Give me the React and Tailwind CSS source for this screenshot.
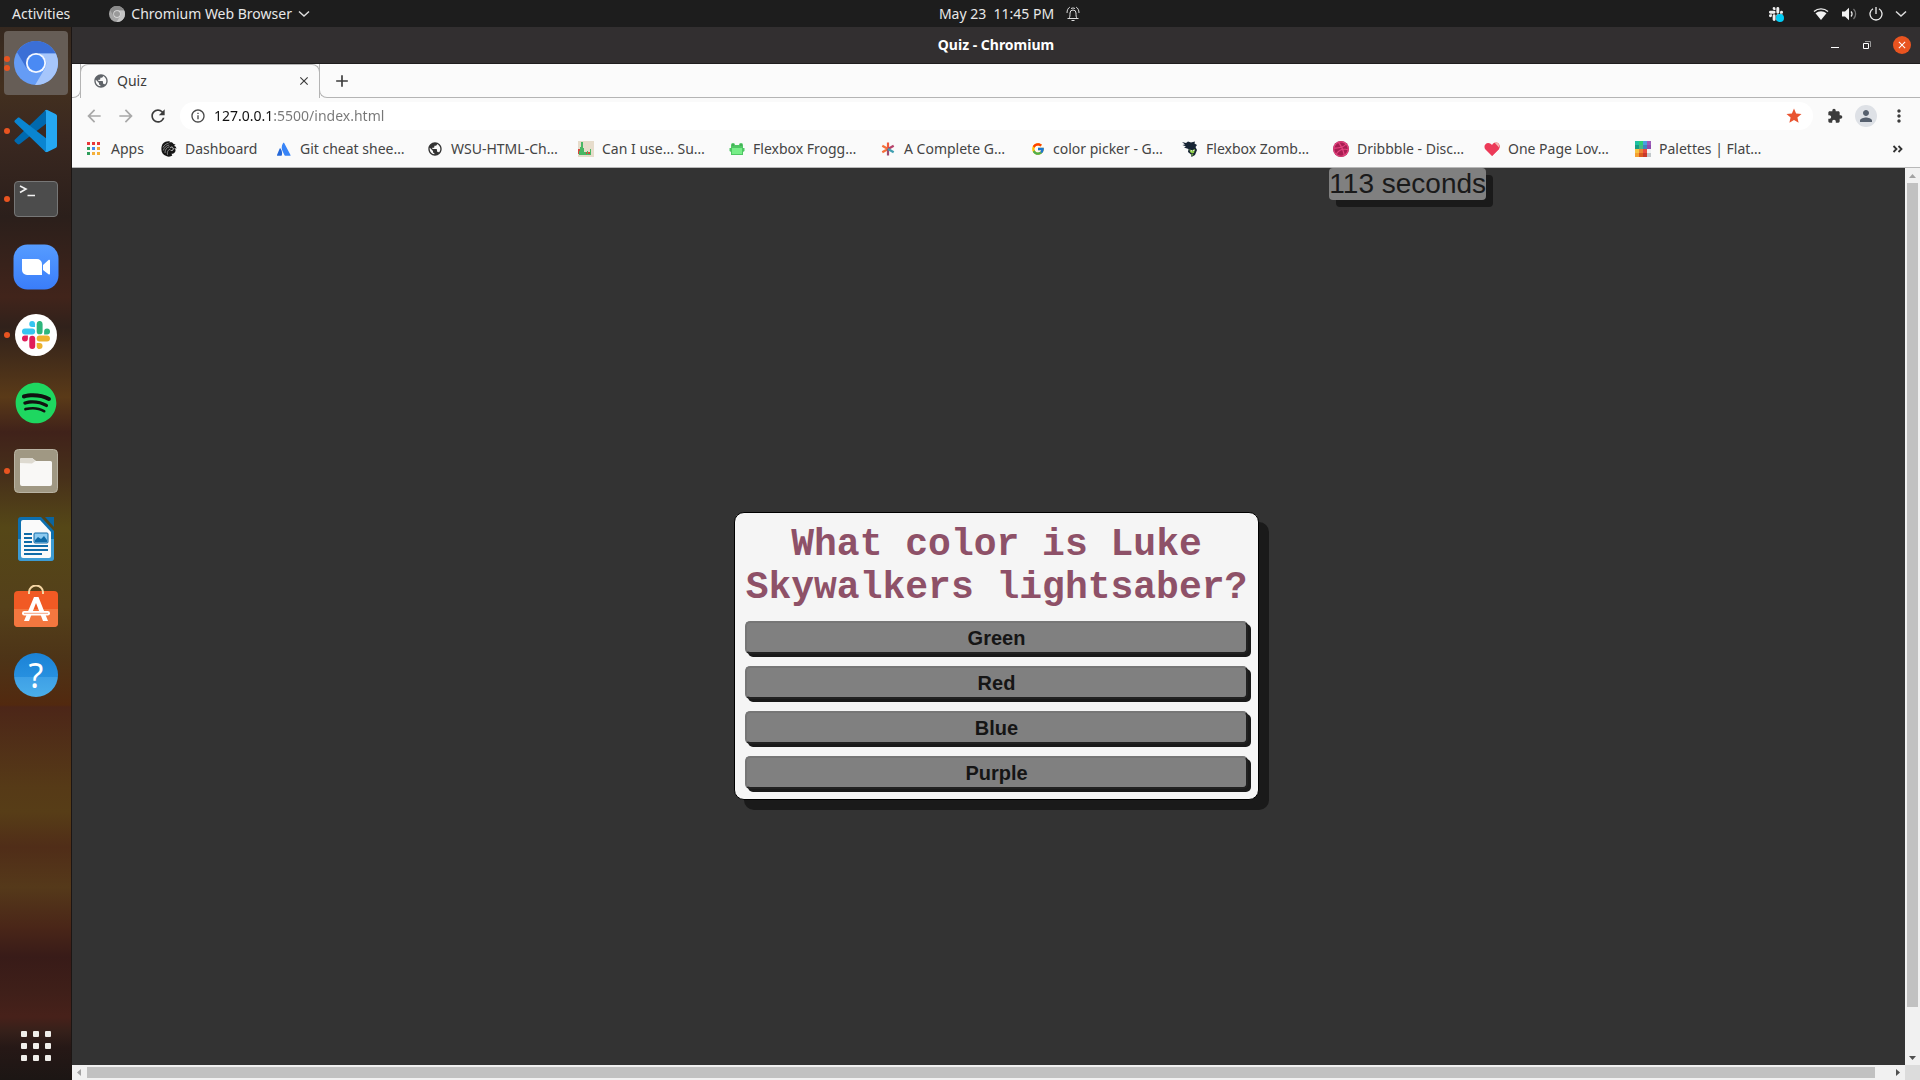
import React from "react";
import {
  MdArrowBack,
  MdArrowForward,
  MdRefresh,
  MdInfoOutline,
  MdExtension,
  MdPerson,
  MdPublic,
  MdStar,
  MdMoreVert,
  MdClose,
  MdAdd,
} from "react-icons/md";
import { FaSpotify, FaDribbble } from "react-icons/fa";
import { FcGoogle } from "react-icons/fc";

function ChromiumIcon({ className, mono = false }) {
  const c = mono
    ? ["#8a8a8a", "#a5a5a5", "#c4c4c4", "#9a9a9a", "#e4e4e4"]
    : ["#3b6fd6", "#659cf5", "#a6c6fb", "#4a8af4", "#f4f8ff"];
  return (
    <svg viewBox="0 0 48 48" className={className} aria-hidden="true">
      <circle cx="24" cy="24" r="24" fill={c[1]} />
      <path d="M3.2 12A24 24 0 0 1 45.6 13.5H24L13.5 29.5Z" fill={c[0]} />
      <path d="M45.6 13.5A24 24 0 0 1 23 48L34 29.5A11 11 0 0 0 24 13.5Z" fill={c[2]} />
      <circle cx="24" cy="24" r="11" fill={c[4]} />
      <circle cx="24" cy="24" r="9" fill={c[3]} />
    </svg>
  );
}

function CodeIcon() {
  return (
    <svg viewBox="0 0 44 44" className="size-11" aria-hidden="true">
      <path d="M1 30.5a1.500 1.500 0 0 0 0 2.200l2.500 2.300c.6.600 1.600.600 2.300.1L33 14V.8c-1 0-1.600.5-2.400 1.200Z" fill="#0069ae" />
      <path d="M1 13.500a1.500 1.500 0 0 1 0-2.200l2.500-2.300c.6-.6 1.600-.6 2.300-.1L33 30v13.200c-1 0-1.600-.5-2.400-1.200Z" fill="#0a85d1" />
      <path d="M30.600 42c1.200 1.100 2.200 1.200 3.300.7l7.600-3.700c1-.5 1.500-1.200 1.500-2.300V7.300c0-1.100-.5-1.800-1.500-2.300L33.900 1.300c-1.100-.5-2.100-.4-3.300.7.800-.3 1.400.2 1.400 1.200v37.600c0 1-.6 1.500-1.400 1.200Z" fill="#25a8f2" />
    </svg>
  );
}

function TerminalIcon() {
  return (
    <svg viewBox="0 0 44 36" className="h-9 w-11" aria-hidden="true">
      <rect x="0.500" y="0.500" width="43" height="35" rx="3.500" fill="#4c4c4c" stroke="#777" />
      <path d="M6 5l6 3-6 3.500M13.500 14.500h7.500" fill="none" stroke="#f2f2f2" strokeWidth="1.600" />
    </svg>
  );
}

function ZoomIcon() {
  return (
    <svg viewBox="0 0 46 46" className="size-[46px]" aria-hidden="true">
      <defs>
        <linearGradient id="zoom-blue" x1="0" y1="0" x2="0" y2="1">
          <stop offset="0" stopColor="#569cff" />
          <stop offset="1" stopColor="#3a7dfa" />
        </linearGradient>
      </defs>
      <rect x="0.500" y="0.500" width="45" height="45" rx="14" fill="url(#zoom-blue)" />
      <path d="M9 15h15a5 5 0 0 1 5 5v11H14a5 5 0 0 1-5-5ZM30 21l5.500-5c.8-.6 1.500-.3 1.500.6v13c0 .9-.7 1.200-1.500.6L30 26Z" fill="#fff" />
    </svg>
  );
}

function SlackMark({ className, colors }) {
  const [blue, green, yellow, red] = colors;
  return (
    <svg viewBox="0 0 28 28" className={className} aria-hidden="true">
      <path d="M10.200 0a2.900 2.900 0 1 0 0 5.900H13V2.900A2.900 2.900 0 0 0 10.200 0ZM10.200 7.500H2.900a2.900 2.900 0 0 0 0 5.900h7.300a2.900 2.900 0 0 0 0-5.900Z" fill={blue} />
      <path d="M28 10.400a2.900 2.900 0 0 0-5.900 0v3H25a2.900 2.900 0 0 0 3-3ZM20.600 10.400V2.900a2.900 2.900 0 0 0-5.900 0v7.500a2.900 2.900 0 0 0 5.900 0Z" fill={green} />
      <path d="M17.600 28a2.900 2.900 0 0 0 0-5.900h-2.900V25a2.900 2.900 0 0 0 2.900 3ZM17.600 20.500H25a2.900 2.900 0 0 0 0-5.900h-7.400a2.900 2.900 0 0 0 0 5.900Z" fill={yellow} />
      <path d="M0 17.600a2.900 2.900 0 0 0 5.900 0v-3H2.900a2.900 2.900 0 0 0-2.900 3ZM7.300 17.600V25a2.900 2.900 0 0 0 5.900 0v-7.400a2.900 2.900 0 0 0-5.900 0Z" fill={red} />
    </svg>
  );
}

function FilesIcon() {
  return (
    <svg viewBox="0 0 44 44" className="size-11" aria-hidden="true">
      <rect x="0.500" y="0.500" width="43" height="43" rx="4" fill="#a09883" stroke="#b9b3a3" />
      <path d="M6 35V10.500A1.500 1.500 0 0 1 7.500 9H18l4 3h14.500A1.500 1.500 0 0 1 38 13.500V35a2 2 0 0 1-2 2H8a2 2 0 0 1-2-2Z" fill="#f9f8f6" />
      <path d="M6 14V10.500A1.500 1.500 0 0 1 7.500 9H18l3.500 3L18 14.500Z" fill="#dedad0" />
    </svg>
  );
}

function WriterIcon() {
  return (
    <svg viewBox="0 0 38 46" className="h-[46px] w-[38px]" aria-hidden="true">
      <path d="M4 1h20l13 14v27a3 3 0 0 1-3 3H4a3 3 0 0 1-3-3V4a3 3 0 0 1 3-3Z" fill="#0d6fae" />
      <path d="M1 23h36v19a3 3 0 0 1-3 3H4a3 3 0 0 1-3-3Z" fill="#3c9bd3" />
      <path d="M6 4h17l11 12v24a2 2 0 0 1-2 2H6a2 2 0 0 1-2-2V6a2 2 0 0 1 2-2Z" fill="#fafafa" />
      <path d="M28 1h9v10Z" fill="#0b659f" />
      <path d="M7 18h8M7 22h8M7 26h8M7 30h24M7 34h24M7 38h18" stroke="#0f6ba8" strokeWidth="2" />
      <rect x="17" y="17" width="14" height="10" rx="1" fill="#8ccaf0" stroke="#0f6ba8" />
      <path d="M18 26v-2l3-3 3 2 3-3 3 4v2Z" fill="#0f6ba8" />
    </svg>
  );
}

function SoftwareIcon() {
  return (
    <svg viewBox="0 0 44 44" className="size-11" aria-hidden="true">
      <rect y="6" width="44" height="36" rx="4" fill="#f15a24" />
      <path d="M0 24h44v14a4 4 0 0 1-4 4H4a4 4 0 0 1-4-4Z" fill="#f3773f" />
      <path d="M15 9V7a7 6.500 0 0 1 14 0v2" fill="none" stroke="#f5d6a4" strokeWidth="2" />
      <path d="M20 12h4.500L34 36h-5l-7-18-7 18h-5Z" fill="#fff" />
      <rect x="8" y="26" width="28" height="4.500" rx="2.200" fill="#fff" />
      <path d="M10 28.300h24" stroke="#f7a27e" />
    </svg>
  );
}

function HelpIcon() {
  return (
    <span className="flex size-11 items-center justify-center rounded-full bg-[linear-gradient(#1b82d6_0%,#2790df_54%,#3ea0e6_55%,#4aaeea_100%)] font-['Noto_Sans',sans-serif] text-[34px] leading-none text-white">
      ?
    </span>
  );
}

const dock = [
  { name: "Chromium", dots: 2, active: true, icon: <ChromiumIcon className="size-11" /> },
  { name: "Visual Studio Code", dots: 1, icon: <CodeIcon /> },
  { name: "Terminal", dots: 1, icon: <TerminalIcon /> },
  { name: "Zoom", dots: 0, icon: <ZoomIcon /> },
  {
    name: "Slack",
    dots: 1,
    icon: (
      <span className="flex size-[42px] items-center justify-center rounded-full bg-white">
        <SlackMark className="size-7" colors={["#36c5f0", "#2eb67d", "#ecb22e", "#e01e5a"]} />
      </span>
    ),
  },
  {
    name: "Spotify",
    dots: 0,
    icon: (
      <span className="rounded-full bg-[radial-gradient(#111_62%,transparent_63%)]">
        <FaSpotify className="size-[42px] text-[#1ed760]" />
      </span>
    ),
  },
  { name: "Files", dots: 1, icon: <FilesIcon /> },
  { name: "LibreOffice Writer", dots: 0, icon: <WriterIcon /> },
  { name: "Ubuntu Software", dots: 0, icon: <SoftwareIcon /> },
  { name: "Help", dots: 0, icon: <HelpIcon /> },
];

function Dock() {
  return (
    <nav
      aria-label="Dock"
      className="flex w-[72px] shrink-0 flex-col gap-1 border-r border-[#1c1614] bg-[linear-gradient(#35281f_0px,#43301f_60px,#3a2820_110px,#2b1f1b_190px,#41241b_270px,#30211b_300px,#5a3a18_370px,#40221a_405px,#47301a_450px,#554717_500px,#54401a_580px,#4d3417_630px,#52290f_678px,#4c2618_680px,#563a17_760px,#573d17_785px,#502d18_820px,#55391a_860px,#4a2618_900px,#381b18_930px,#3f1f19_965px,#47211a_990px,#35201a_1005px,#261816_1020px,#1c1614_1053px)] pt-1"
    >
      {dock.map((d) => (
        <button
          key={d.name}
          type="button"
          aria-label={d.name}
          className={
            d.active
              ? "relative ml-1 flex size-16 items-center justify-center rounded bg-[#665d56]"
              : "relative ml-1 flex size-16 items-center justify-center rounded"
          }
        >
          {d.icon}
          <span className="absolute top-0 left-0 flex h-full flex-col justify-center gap-[3px]">
            {Array.from({ length: d.dots }, (_, i) => (
              <span key={i} className="size-[6px] rounded-full bg-[#e95420]" />
            ))}
          </span>
        </button>
      ))}
      <button
        type="button"
        aria-label="Show applications"
        className="mt-auto mb-[19px] ml-[21px] grid size-[30px] grid-cols-3 gap-[6px]"
      >
        {Array.from({ length: 9 }, (_, i) => (
          <span key={i} className="size-[6px] rounded-[1px] bg-[#f0eeea]" />
        ))}
      </button>
    </nav>
  );
}

function Chevron() {
  return (
    <svg viewBox="0 0 12 8" className="h-2 w-3" fill="none" stroke="#ddd" strokeWidth="1.500" aria-hidden="true">
      <path d="M1 1.500l5 4.500 5-4.500" />
    </svg>
  );
}

function TopBar() {
  return (
    <header className="flex h-[27px] shrink-0 items-center bg-[#1d1d1d] text-sm leading-5 text-[#e8e8e8]">
      <div className="flex flex-1 items-center pl-3">
        <button type="button">Activities</button>
        <button type="button" className="ml-[39px] flex items-center gap-[6px]">
          <ChromiumIcon mono className="size-4" />
          Chromium Web Browser
          <Chevron />
        </button>
      </div>
      <button type="button" className="ml-[100px] flex items-center gap-3">
        <span className="whitespace-pre">May 23  11:45 PM</span>
        <svg viewBox="0 0 14 16" className="h-4 w-[14px]" fill="none" stroke="#ddd" aria-hidden="true">
          <path d="M1.500 12.500h11M3 12.500c1-1.500 1-3 1-5.500a3 3 0 0 1 6 0c0 2.500 0 4 1 5.500M1 7c0-3 1.200-5 2.800-5.800M13 7c0-3-1.200-5-2.800-5.800M5 2.500a4 4 0 0 1 4 0M5.500 14.500h3" />
        </svg>
      </button>
      <div className="flex flex-1 items-center justify-end pr-[13px]">
        <span className="relative mr-[30px]">
          <SlackMark className="size-[14px]" colors={["#eee", "#eee", "#eee", "#eee"]} />
          <span className="absolute -right-px -bottom-px size-2 rounded-full bg-[#00ccf5]" />
        </span>
        <svg viewBox="0 0 16 14" className="mr-3 h-[14px] w-4" aria-hidden="true">
          <path d="M1 4.500a10.500 10.500 0 0 1 14 0" fill="none" stroke="#eee" strokeWidth="1.400" />
          <path d="M2.500 6.200a8.500 8.500 0 0 1 11 0L8 13Z" fill="#f2f2f2" />
        </svg>
        <svg viewBox="0 0 16 14" className="mr-3 h-[14px] w-4" aria-hidden="true">
          <path d="M1 4.500h3L8 .8v12.400L4 9.500H1Z" fill="#f2f2f2" />
          <path d="M10 4.500a3.500 3.500 0 0 1 0 5" fill="none" stroke="#eee" strokeWidth="1.300" />
          <path d="M12.500 2a7 7 0 0 1 0 10" fill="none" stroke="#777" strokeWidth="1.300" />
        </svg>
        <svg viewBox="0 0 14 14" className="mr-3 size-[14px]" fill="none" stroke="#eee" strokeWidth="1.300" aria-hidden="true">
          <path d="M7 0v7M4 1.800a6 6 0 1 0 6 0" />
        </svg>
        <Chevron />
      </div>
    </header>
  );
}

function TitleBar() {
  return (
    <div className="grid h-[37px] shrink-0 grid-cols-[1fr_auto_1fr] items-center border-b border-[#1f1d1e] bg-[#322f30] text-white">
      <span />
      <h1 className="text-sm leading-5 font-bold">Quiz - Chromium</h1>
      <div className="flex items-center justify-end gap-[22px] pr-[9px]">
        <button type="button" aria-label="Minimize" className="flex h-3 w-[12px] items-end justify-center pb-[3px]">
          <span className="h-px w-2 bg-white" />
        </button>
        <button type="button" aria-label="Restore">
          <svg viewBox="0 0 8 8" className="size-2" fill="none" aria-hidden="true">
            <path d="M2 .5h5.500V6" stroke="#999" />
            <path d="M.500 2.500h5v5h-5Z" stroke="#fff" />
          </svg>
        </button>
        <button type="button" aria-label="Close" className="flex size-[18px] items-center justify-center rounded-full bg-[#e95420]">
          <MdClose className="size-3" />
        </button>
      </div>
    </div>
  );
}

function TabStrip() {
  return (
    <div className="flex h-[34px] shrink-0 bg-[#fbfbfb] text-[#3c3c3c]">
      <div className="w-[9px] rounded-br-lg border-r border-b border-[#b4b4b4]" />
      <div className="-ml-px flex w-[240px] items-center rounded-t-lg border-x border-t border-[#b4b4b4] bg-[#fafafa] pr-2 pb-[2px] pl-3 text-sm leading-5">
        <MdPublic className="size-4 text-[#5f6368]" />
        <span className="ml-2 flex-1">Quiz</span>
        <button type="button" aria-label="Close tab">
          <MdClose className="size-[14px]" />
        </button>
      </div>
      <div className="-ml-px flex flex-1 items-center rounded-bl-lg border-b border-l border-[#b4b4b4] pl-3">
        <button type="button" aria-label="New tab">
          <MdAdd className="size-5" />
        </button>
      </div>
    </div>
  );
}

function Toolbar() {
  return (
    <div className="flex h-[32px] shrink-0 items-center bg-[#fafafa] pt-1 pr-[11px] pl-3 text-[#3c3c3c]">
      <button type="button" aria-label="Back" className="mr-3 text-[#a8a8a8]">
        <MdArrowBack className="size-5" />
      </button>
      <button type="button" aria-label="Forward" className="mr-3 text-[#a8a8a8]">
        <MdArrowForward className="size-5" />
      </button>
      <button type="button" aria-label="Reload" className="mr-3">
        <MdRefresh className="size-5" />
      </button>
      <div className="flex h-7 flex-1 items-center rounded-full bg-white pr-[10px] pl-[10px]">
        <MdInfoOutline className="size-4 text-[#4a4a4a]" />
        <input
          aria-label="Address"
          defaultValue="127.0.0.1:5500/index.html"
          className="ml-2 flex-1 bg-[linear-gradient(90deg,#111_58px,#777_58px)] bg-clip-text text-sm leading-5 text-transparent outline-none"
        />
        <button type="button" aria-label="Edit bookmark">
          <MdStar className="size-[18px] text-[#e95430]" />
        </button>
      </div>
      <button type="button" aria-label="Extensions" className="ml-[14px]">
        <MdExtension className="size-4" />
      </button>
      <button type="button" aria-label="Profile" className="ml-3 flex size-[22px] items-center justify-center rounded-full bg-[#dee1e6] text-[#56606e]">
        <MdPerson className="size-[18px]" />
      </button>
      <button type="button" aria-label="Menu" className="ml-3">
        <MdMoreVert className="size-5" />
      </button>
    </div>
  );
}

const appColors = ["#e8373a", "#e8373a", "#e8373a", "#2f9e5c", "#3f86f0", "#f0a437", "#2f9e5c", "#f5b03a", "#f5b03a"];
const paletteColors = [
  "#1fc0a2", "#2bcf74", "#4a9fe0", "#9d5cb8",
  "#179c85", "#45b887", "#3d86c0", "#8e4bae",
  "#f5c443", "#ec8434", "#e94b3c", "#f0f2f3",
  "#f4a032", "#dc5a1c", "#c73a2b", "#c1c7ca",
];

function Tiles({ colors, columns, size, step }) {
  return (
    <svg viewBox="0 0 16 16" className="size-4" shapeRendering="crispEdges" aria-hidden="true">
      {colors.map((c, i) => (
        <rect key={i} x={(i % columns) * step} y={Math.floor(i / columns) * step} width={size} height={size} fill={c} />
      ))}
    </svg>
  );
}

const icon16 = "size-4 shrink-0";
const bookmarks = [
  {
    label: "Dashboard",
    icon: (
      <svg viewBox="0 0 16 16" className={icon16} aria-hidden="true">
        <path d="M2 2.500C4 .5 7-.3 9 .5l-1 1.200c2-.8 4-.2 4.500 1.300l2 .5-1.500 1.500c1.800.3 2.500 1.500 2.200 3-.4-.8-1.200-1.200-2-1 1.500 1 1.800 3 .5 4.500-.8 1-2 1.500-3.200 1.300l.8 1.700c-1.500 1.300-4 1.500-6 .5C2 14 .5 11.500.4 8.500.3 6 .8 4 2 2.500Z" fill="#161616" />
        <path d="M2 6.500c1-2.200 3-3.800 5.500-4.200M2.300 9.500c.8-2.800 3-5 6-5.500M4 12c-.2-3 1.500-5.500 4.500-6.300M6.500 13.800C5.800 11 7 8.800 9.200 8" fill="none" stroke="#c9c9c9" strokeWidth=".6" />
        <path d="M9.300 6.500c1.500-1 3-.2 3 1.300s-1.500 2.200-2.700 1.400" fill="none" stroke="#eee" strokeWidth=".9" />
      </svg>
    ),
  },
  {
    label: "Git cheat shee…",
    icon: (
      <svg viewBox="0 0 16 16" className={icon16} aria-hidden="true">
        <path d="M4.500 7.500c-.3-.4-.6-.3-.8 0L1 14c-.2.400 0 .7.400.7h4.200c1-1.800.6-5.200-1.100-7.200Z" fill="#2467d8" />
        <path d="M7 2.200c-1.700 2.800-1.600 5.600-.4 8l1.900 4.100c.1.300.3.400.6.400h5c.5 0 .6-.4.400-.7L8.300 2.200c-.3-.6-.9-.6-1.300 0Z" fill="#3884f7" />
      </svg>
    ),
  },
  { label: "WSU-HTML-Ch…", icon: <MdPublic className="size-4 shrink-0 text-[#333]" /> },
  {
    label: "Can I use... Su…",
    icon: (
      <svg viewBox="0 0 16 16" className={icon16} aria-hidden="true">
        <path d="M0 0h16v16H0Z" fill="#e6dccb" />
        <path d="M0 8h2v5H0ZM8 11h4v3H8Z" fill="#d6473c" />
        <path d="M1 14v-4h1V6h1V1h2v6h1v4h2v2h1v-3h1v3h2V8h1v6Z" fill="#48b765" />
      </svg>
    ),
  },
  {
    label: "Flexbox Frogg…",
    icon: (
      <svg viewBox="0 0 16 16" className={icon16} aria-hidden="true">
        <path d="M2 6V4a2 2 0 0 1 4 0h4a2 2 0 0 1 4 0v3h1.500v3L14 11v3H2v-3L.5 10V7H2Z" fill="#4fc764" />
        <path d="M3 7h10v6H3Z" fill="#77ee88" />
        <path d="M3.500 4h1M11.500 4h1" stroke="#2a6b36" />
      </svg>
    ),
  },
  {
    label: "A Complete G…",
    icon: (
      <svg viewBox="0 0 16 16" className={icon16} strokeWidth="2.200" aria-hidden="true">
        <path d="M8 8V1.500" stroke="#ef5a3c" />
        <path d="M8 8L2.300 4.700M8 8l-5.700 3.300" stroke="#f4713b" />
        <path d="M8 8v6.500" stroke="#9d4a70" />
        <path d="M8 8l5.700-3.300" stroke="#b7426a" />
        <path d="M8 8l5.700 3.300" stroke="#3f9fb0" />
      </svg>
    ),
  },
  { label: "color picker - G…", icon: <FcGoogle className="size-[14px] shrink-0" /> },
  {
    label: "Flexbox Zomb…",
    icon: (
      <svg viewBox="0 0 16 16" className={icon16} aria-hidden="true">
        <path d="M0 1l4 1 2-1.500L9 1.500l4-1-.5 2L15 4l-1.500 2 1.500 3-2 5-3.500 2-.5-2.500L6 11l.5-3L2 6.500l2-1L.5 4 3 3.500Z" fill="#172434" />
        <path d="M7.500 8l2 1.500L13 8l-1 4-2 .5-2-1.500ZM9 13.500l2.500-.5-1.500 2Z" fill="#8ccb45" />
        <path d="M9 9.800h1M11.300 9.500h1" stroke="#fff" />
      </svg>
    ),
  },
  { label: "Dribbble - Disc…", icon: <FaDribbble className="size-4 shrink-0 rounded-full bg-[#a81d52] text-[#e5437f]" /> },
  {
    label: "One Page Lov…",
    icon: (
      <svg viewBox="0 0 16 16" className={icon16} aria-hidden="true">
        <path d="M8 15L1 8C-1 4 3 0 7 3l1 1 5 0 2 4Z" fill="#ec3a58" />
        <path d="M8 4c2-3 5-3 7-1 1 2 1 3 0 5l-7 7Z" fill="#ec3a58" />
        <path d="M10 1l5 5.500c.500-2 0-3.500-1.200-4.500C12.700 1 11.200.7 10 1Z" fill="#f3b9b4" />
      </svg>
    ),
  },
  { label: "Palettes | Flat…", icon: <Tiles colors={paletteColors} columns={4} size={4} step={4} /> },
];

function BookmarkBar() {
  return (
    <div className="flex h-[38px] shrink-0 items-center border-b border-[#b8b8b8] bg-[#fafafa] pr-4 pl-[15px] text-sm leading-5 text-[#444]">
      <a href="#apps" className="flex w-[74px] items-center gap-[10px] whitespace-nowrap">
        <svg viewBox="0 0 14 14" className="size-[14px]" shapeRendering="crispEdges" aria-hidden="true">
          {appColors.map((c, i) => (
            <rect key={i} x={(i % 3) * 5} y={Math.floor(i / 3) * 5} width="3" height="3" fill={c} />
          ))}
        </svg>
        Apps
      </a>
      {bookmarks.map((b, i) => (
        <a
          key={b.label}
          href="#bookmark"
          className={
            i === 0
              ? "flex w-[115px] shrink-0 items-center gap-2 whitespace-nowrap"
              : "flex w-[151px] shrink-0 items-center gap-2 whitespace-nowrap"
          }
        >
          {b.icon}
          {b.label}
        </a>
      ))}
      <button type="button" aria-label="More bookmarks" className="ml-auto">
        <svg viewBox="0 0 12 8" className="h-2 w-3" fill="none" stroke="#333" strokeWidth="1.800" aria-hidden="true">
          <path d="M1.500 1l3 3-3 3M6.500 1l3 3-3 3" />
        </svg>
      </button>
    </div>
  );
}

const answers = ["Green", "Red", "Blue", "Purple"];

function QuizPage() {
  return (
    <main className="min-h-0 min-w-0 flex-1 overflow-hidden bg-[#333] font-['Liberation_Sans',Arial,sans-serif]">
      <div className="flex h-[calc(100%+47px)] w-[calc(100%+16px)] flex-col">
        <p className="ml-[68%] self-start rounded bg-[#808080] text-[28px] leading-8 text-[#1a1a1a] shadow-[7px_7px_#1a1a1a]">
          113 seconds
        </p>
        <div className="flex flex-1 items-center justify-center">
          <section className="w-[525px] rounded-[10px] border border-black bg-[#f5f5f5] p-[10px] shadow-[10px_10px_#1a1a1a]">
            <h2 className="text-center font-['Liberation_Mono',monospace] text-[38px] leading-[43px] font-bold text-[#8e5168]">
              What color is Luke Skywalkers lightsaber?
            </h2>
            <div className="mt-3 flex flex-col gap-3">
              {answers.map((a) => (
                <button
                  key={a}
                  type="button"
                  className="h-[33px] rounded-[5px] border-2 border-t-[#767676] border-r-[#212121] border-b-[#212121] border-l-[#767676] bg-[#808080] text-[20px] leading-6 font-bold text-[#151515] shadow-[3px_3px_#1a1a1a]"
                >
                  {a}
                </button>
              ))}
            </div>
          </section>
        </div>
      </div>
    </main>
  );
}

function Arrow({ d, fill }) {
  return (
    <svg viewBox="0 0 15 15" className="size-[15px] shrink-0" aria-hidden="true">
      <path d={d} fill={fill} />
    </svg>
  );
}

function VerticalScrollbar() {
  return (
    <div className="flex w-[15px] shrink-0 flex-col bg-[#f1f1f1]">
      <Arrow d="M4 10l3.500-4 3.500 4Z" fill="#a3a3a3" />
      <div className="flex flex-1 flex-col px-[2px]">
        <div className="h-[95%] bg-[#c1c1c1]" />
      </div>
      <Arrow d="M4 6l3.500 4L11 6Z" fill="#505050" />
    </div>
  );
}

function HorizontalScrollbar() {
  return (
    <div className="flex h-[15px] shrink-0 bg-[#dcdcdc]">
      <div className="flex flex-1 bg-[#f1f1f1]">
        <Arrow d="M9 4L5 7.500 9 11Z" fill="#a3a3a3" />
        <div className="flex flex-1 py-[2px] pr-[15px]">
          <div className="flex-1 bg-[#c1c1c1]" />
        </div>
        <Arrow d="M6 4l4 3.500L6 11Z" fill="#505050" />
      </div>
      <div className="w-[15px]" />
    </div>
  );
}

export default function App() {
  return (
    <div className="flex h-screen flex-col overflow-hidden font-['Noto_Sans',sans-serif]">
      <TopBar />
      <div className="flex min-h-0 flex-1">
        <Dock />
        <div className="flex min-w-0 flex-1 flex-col">
          <TitleBar />
          <TabStrip />
          <Toolbar />
          <BookmarkBar />
          <div className="flex min-h-0 flex-1">
            <QuizPage />
            <VerticalScrollbar />
          </div>
          <HorizontalScrollbar />
        </div>
      </div>
    </div>
  );
}
